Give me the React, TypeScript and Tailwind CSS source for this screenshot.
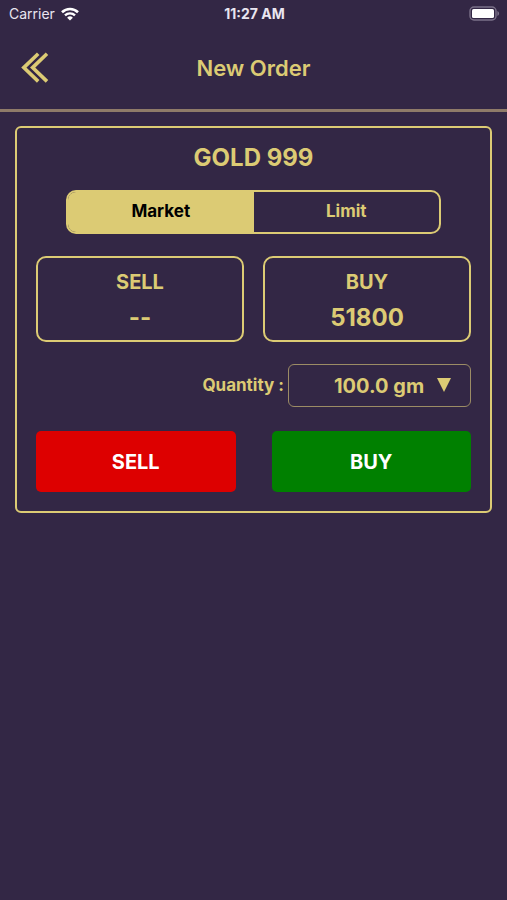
import React, { useState } from "react";

const quantities = ["100.0 gm", "200.0 gm", "500.0 gm", "1000.0 gm"];

const StatusBar = () => {
	return (
		<div className="grid h-7 grid-cols-3 items-center pl-[9px] pr-[7px] text-[#e9e5f0]">
			<div className="flex items-center gap-1.5 text-sm">
				<span>Carrier</span>
				<svg viewBox="0 0 18 14" className="h-3.5 w-[18px]" fill="none" stroke="#fff">
					<path d="M1 5.2a11.6 11.6 0 0 1 16 0" strokeWidth="2.6" />
					<path d="M4 8.4a7.2 7.2 0 0 1 10 0" strokeWidth="2.4" />
					<path d="M9 13.6 6.1 10.7a4.2 4.2 0 0 1 5.8 0Z" fill="#fff" stroke="none" />
				</svg>
			</div>
			<span className="text-center text-sm font-bold">11:27 AM</span>
			<svg viewBox="0 0 31 15" className="mb-0.5 h-[15px] w-[31px] justify-self-end">
				<rect x="1" y="1" width="26" height="13" rx="4" fill="none" stroke="#7b7189" strokeWidth="1.4" />
				<rect x="3" y="3" width="22" height="9" rx="1.6" fill="#fff" />
				<path d="M28.4 5v5c1-.4 1.7-1.4 1.7-2.5s-.7-2.1-1.7-2.5Z" fill="#7b7189" />
			</svg>
		</div>
	);
};

const Quote = ({ label, price }: { label: string; price: string }) => {
	return (
		<div className="flex flex-col items-center gap-1 rounded-[10px] border-2 border-[#dccb74] pb-1 pt-2.5">
			<span className="text-xl leading-7">{label}</span>
			<span className="text-2xl leading-9">{price}</span>
		</div>
	);
};

const App = () => {
	const [orderType, setOrderType] = useState("Market");
	const [quantity, setQuantity] = useState(quantities[0]);

	return (
		<div className="min-h-screen bg-[#332745] font-['Inter',sans-serif] font-bold text-[#dccb74]">
			{/* status bar and title */}
			<header className="border-b-3 border-[#8f7b69] font-normal">
				<StatusBar />
				<div className="grid h-[81px] grid-cols-[1fr_auto_1fr] items-center px-5">
					<button type="button" aria-label="Back" className="w-fit pb-0.5">
						<svg viewBox="0 0 30 32" className="h-8 w-[30px]" fill="none" stroke="currentColor" strokeWidth="3.6">
							<path d="M18.2 1.8 3.8 15.6 18.2 29.4M27 1.8 12.6 15.6 27 29.4" />
						</svg>
					</button>
					<h1 className="text-[22px] font-semibold">New Order</h1>
				</div>
			</header>

			{/* order form */}
			<main className="mx-[15px] mt-3.5 rounded-md border-2 border-[#dccb74] px-[19px] pb-[19px] pt-3.5">
				<h2 className="text-center text-2xl">GOLD 999</h2>

				<div className="mx-[30px] mt-4 grid grid-cols-2 overflow-hidden rounded-[10px] border-2 border-[#dccb74]">
					{["Market", "Limit"].map((type) => (
						<button
							key={type}
							type="button"
							aria-pressed={orderType === type}
							onClick={() => setOrderType(type)}
							className={`h-10 text-[17px] ${orderType === type ? "bg-[#dccb74] text-black" : ""}`}
						>
							{type}
						</button>
					))}
				</div>

				<div className="mt-[22px] grid grid-cols-2 gap-[19px]">
					<Quote label="SELL" price="--" />
					<Quote label="BUY" price="51800" />
				</div>

				<div className="mt-[22px] flex items-center justify-end gap-1">
					<label htmlFor="quantity" className="text-[17px]">
						Quantity :
					</label>
					<div className="relative w-[183px]">
						<select
							id="quantity"
							value={quantity}
							onChange={(e) => setQuantity(e.target.value)}
							className="block h-[43px] w-full appearance-none rounded-md border border-[#9c8c65] pl-[45px] text-xl"
						>
							{quantities.map((item) => (
								<option key={item}>{item}</option>
							))}
						</select>
						<svg
							viewBox="0 0 14 14"
							className="pointer-events-none absolute right-5 top-3.5 size-3.5"
							fill="currentColor"
						>
							<path d="M0 0h14L7 14Z" />
						</svg>
					</div>
				</div>

				<div className="mt-6 grid grid-cols-2 gap-9 text-xl text-white">
					<button type="button" className="h-[61px] rounded-[5px] bg-[#dd0000]">
						SELL
					</button>
					<button type="button" className="h-[61px] rounded-[5px] bg-[#008000]">
						BUY
					</button>
				</div>
			</main>
		</div>
	);
};

export default App;
